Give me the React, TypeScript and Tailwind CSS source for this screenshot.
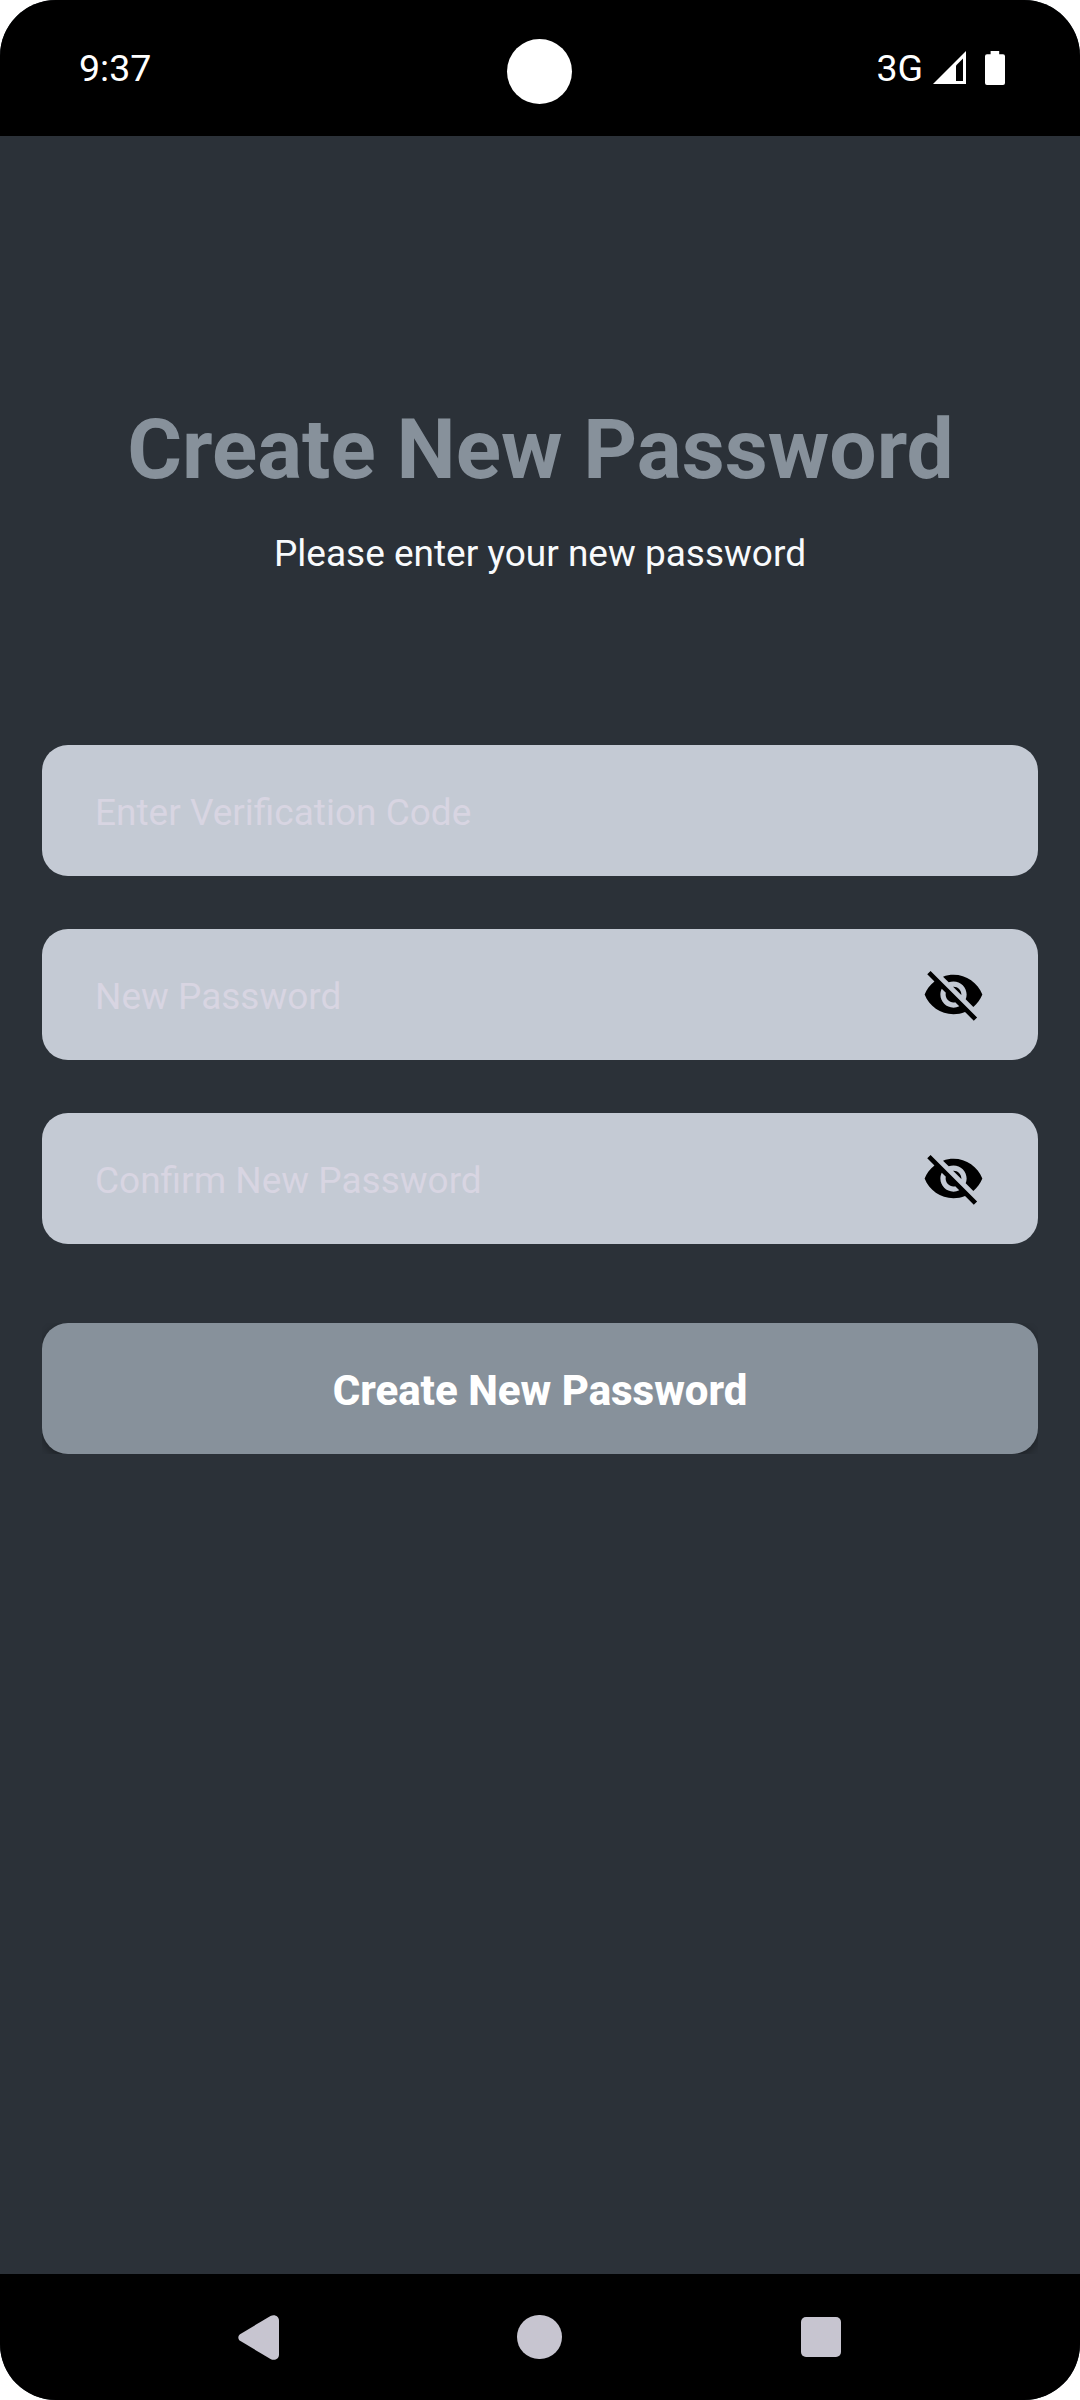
import React, { useState } from "react";

function VisibilityOffIcon() {
  return (
    <svg className="size-[63px]" viewBox="0 0 24 24" fill="#000">
      <path d="M12 7c2.76 0 5 2.24 5 5 0 .65-.13 1.26-.36 1.83l2.92 2.92c1.51-1.26 2.7-2.89 3.43-4.75-1.73-4.39-6-7.5-11-7.5-1.4 0-2.74.25-3.98.7l2.16 2.16C10.74 7.13 11.35 7 12 7zM2 4.27l2.28 2.28.46.46C3.08 8.3 1.78 10.02 1 12c1.73 4.39 6 7.5 11 7.5 1.55 0 3.03-.3 4.38-.84l.42.42L19.73 22 21 20.73 3.27 3 2 4.27zM7.53 9.8l1.55 1.55c-.05.21-.08.43-.08.65 0 1.66 1.34 3 3 3 .22 0 .44-.03.65-.08l1.55 1.55c-.67.33-1.41.53-2.2.53-2.76 0-5-2.24-5-5 0-.79.2-1.53.53-2.2zm4.31-.78l3.15 3.15.02-.16c0-1.66-1.34-3-3-3l-.17.01z" />
    </svg>
  );
}

function StatusBar() {
  return (
    <header className="grid h-[136px] shrink-0 grid-cols-3 bg-black text-white">
      <span className="pt-[46px] pl-[79px] text-[37.5px] leading-[44px]">9:37</span>
      <div className="flex justify-center pt-[39px]">
        <div className="mr-px size-[65px] rounded-full bg-white" />
      </div>
      <div className="flex justify-end pr-[75px]">
        <span className="pt-[46px] text-[37.5px] leading-[44px]">3G</span>
        <svg className="mt-[51px] ml-[10px] h-[33px] w-[33px]" viewBox="0 0 33 33">
          <path d="M0 33 L33 0 V33 Z" fill="#fff" />
          <path d="M23 14.5 L30 7.5 V30 H23 Z" fill="#000" />
        </svg>
        <svg className="mt-[51px] ml-[19px] h-[34px] w-[20px]" viewBox="0 0 20 34" fill="#fff">
          <path d="M5.6 0H14.2V3.2H18a2 2 0 0 1 2 2V32a2 2 0 0 1-2 2H2a2 2 0 0 1-2-2V5.2a2 2 0 0 1 2-2H5.6Z" />
        </svg>
      </div>
    </header>
  );
}

function Field({ placeholder, secret = false }: { placeholder: string; secret?: boolean }) {
  const [value, setValue] = useState("");
  return (
    <div className="flex h-[131px] items-center rounded-[26px] bg-[#c4cad4] pr-[53px] pl-[53px]">
      <input
        type={secret ? "password" : "text"}
        value={value}
        onChange={(e) => setValue(e.target.value)}
        placeholder={placeholder}
        className="mt-[5px] min-w-0 flex-1 text-[37px] leading-[44px] text-[#2b3038] outline-none placeholder:text-[#d8d5e2]"
      />
      {secret && (
        <button type="button" aria-label="Show password">
          <VisibilityOffIcon />
        </button>
      )}
    </div>
  );
}

function NavigationBar() {
  return (
    <nav className="flex h-[126px] shrink-0 items-center justify-between bg-black pr-[239px] pl-[238px]">
      <svg className="h-[45px] w-[41px]" viewBox="0 0 41 45" fill="#c7c5d0">
        <path d="M2 19.2 L32.5 1 C36.5-1.2 41 1.2 41 5.6 V39.4 C41 43.8 36.5 46.2 32.5 44 L2 25.8 C-.2 24.3-.2 20.7 2 19.2Z" />
      </svg>
      <div className="mr-px size-[44.5px] rounded-full bg-[#c7c5d0]" />
      <div className="size-[40.5px] rounded-[5px] bg-[#c7c5d0]" />
    </nav>
  );
}

export default function App() {
  return (
    <div className="h-[2400px] w-[1080px] bg-white font-[Roboto,sans-serif]">
      <div className="flex h-full flex-col overflow-hidden rounded-[56px] bg-[#2b3138]">
        <StatusBar />
        <main className="flex flex-1 flex-col px-[42px] pt-[263px]">
          <h1 className="pl-px text-center text-[83.8px] leading-[100px] font-bold text-[#87919b]">
            Create New Password
          </h1>
          <p className="mt-[33px] text-center text-[37px] leading-[44px] text-[#f8fafc]">
            Please enter your new password
          </p>
          <form className="mt-[169px] flex flex-col gap-[53px]">
            <Field placeholder="Enter Verification Code" />
            <Field placeholder="New Password" secret />
            <Field placeholder="Confirm New Password" secret />
            <div className="mt-[26px] h-[131px] overflow-hidden">
              <button
                type="button"
                className="h-full w-full rounded-[26px] bg-[#87919b] pt-[4px] text-[42px] leading-[50px] font-extrabold text-white shadow-[0_3px_8px_rgba(0,0,0,0.35)]"
              >
                Create New Password
              </button>
            </div>
          </form>
        </main>
        <NavigationBar />
      </div>
    </div>
  );
}
